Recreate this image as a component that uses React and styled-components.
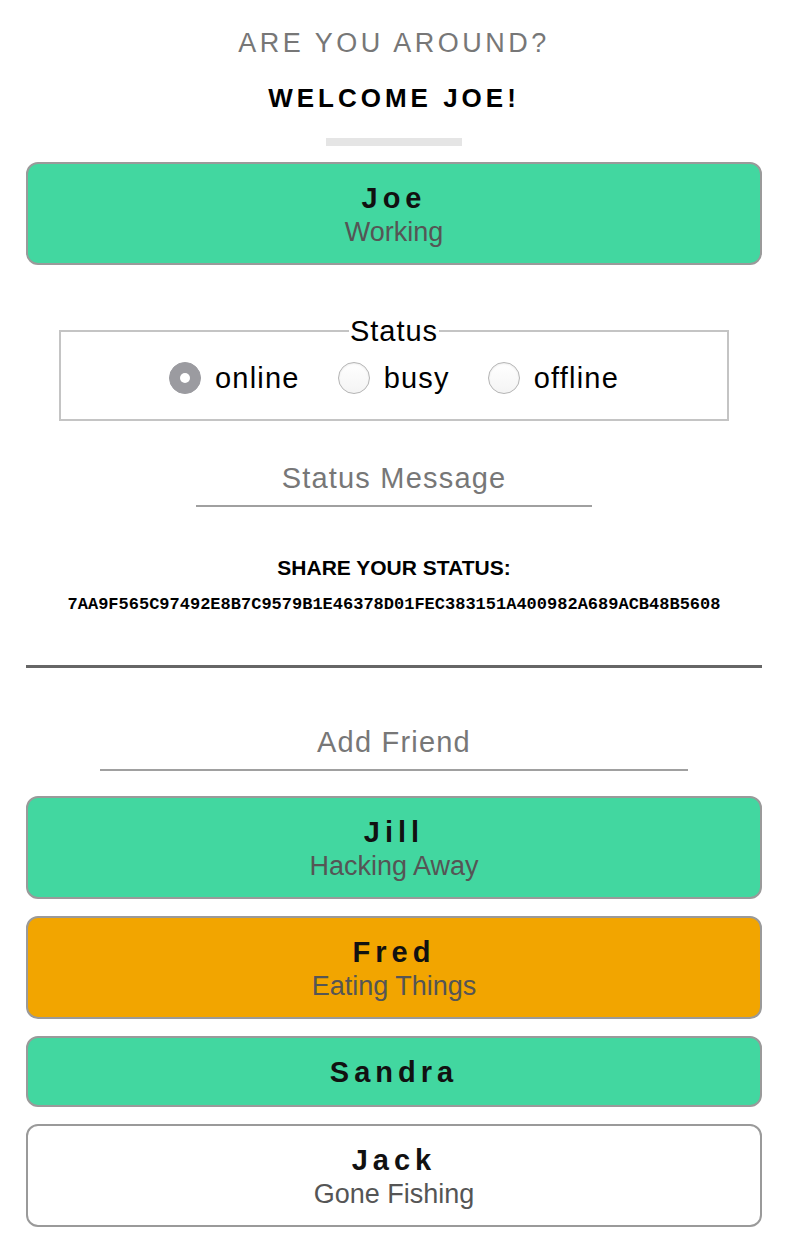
import React, { useState } from 'react';
import styled, { createGlobalStyle } from 'styled-components';

const GlobalStyle = createGlobalStyle`
  html, body {
    margin: 0;
    padding: 0;
    background: #ffffff;
    font-family: "Liberation Sans", Arial, Helvetica, sans-serif;
  }
  * {
    box-sizing: border-box;
  }
`;

const Page = styled.div`
  display: flex;
  flex-direction: column;
  align-items: stretch;
  padding: 27px 26px 40px;
`;

const Title = styled.h2`
  margin: 0;
  font-size: 27px;
  line-height: 32px;
  font-weight: normal;
  letter-spacing: 3.5px;
  color: #777777;
  text-align: center;
`;

const Welcome = styled.h1`
  margin: 23px 0 0;
  font-size: 26px;
  line-height: 32px;
  font-weight: bold;
  letter-spacing: 4px;
  color: #000000;
  text-align: center;
`;

const Bar = styled.div`
  align-self: center;
  width: 136px;
  height: 8px;
  margin-top: 24px;
  background: #e5e5e5;
`;

const statusColors = {
  online: '#42d7a0',
  busy: '#f2a500',
  offline: '#ffffff',
};

const Card = styled.div`
  display: flex;
  flex-direction: column;
  align-items: center;
  padding: 16px 12px 15px;
  border: 2px solid #9a9a9a;
  border-radius: 12px;
  background: ${(p) => statusColors[p.$status]};
`;

const Name = styled.div`
  font-size: 29px;
  line-height: 36px;
  font-weight: bold;
  letter-spacing: 5px;
  color: #111111;
`;

const Message = styled.div`
  font-size: 27px;
  line-height: 32px;
  color: #555555;
`;

const MeCard = styled(Card)`
  margin-top: 16px;
`;

const StatusSet = styled.fieldset`
  margin: 50px 33px 0;
  padding: 11px 12px 21px;
  border: 2px solid #c4c4c4;
  display: flex;
  justify-content: center;
  gap: 38px;
  min-width: 0;
`;

const Legend = styled.legend`
  margin: 0 auto;
  padding: 0 1px;
  font-size: 29px;
  line-height: 32px;
  letter-spacing: 1px;
  color: #000000;
`;

const RadioLabel = styled.label`
  display: flex;
  align-items: center;
  gap: 14px;
  height: 40px;
  font-size: 29px;
  letter-spacing: 1.2px;
  color: #000000;
  cursor: pointer;
`;

const Radio = styled.input`
  appearance: none;
  -webkit-appearance: none;
  margin: 0;
  width: 32px;
  height: 32px;
  border-radius: 50%;
  border: 1px solid #b5b5b5;
  background: linear-gradient(#ffffff, #f4f4f4);
  box-shadow: inset 0 1px 2px rgba(0, 0, 0, 0.08);
  display: grid;
  place-items: center;
  cursor: pointer;

  &:checked {
    border-color: #9b9ba0;
    background: #9b9ba0;
    box-shadow: none;
  }

  &:checked::after {
    content: '';
    width: 10px;
    height: 10px;
    border-radius: 50%;
    background: #ffffff;
  }
`;

const LineInput = styled.input`
  align-self: center;
  width: ${(p) => p.$width}px;
  height: 56px;
  margin-top: ${(p) => p.$top}px;
  padding: 0;
  border: none;
  border-bottom: 2px solid #a0a0a0;
  background: transparent;
  font-family: inherit;
  font-size: 29px;
  letter-spacing: 1.2px;
  text-align: center;
  color: #222222;
  outline: none;

  &::placeholder {
    color: #777777;
  }
`;

const ShareTitle = styled.div`
  margin-top: 49px;
  font-size: 21px;
  line-height: 24px;
  font-weight: bold;
  text-align: center;
  color: #000000;
`;

const ShareCode = styled.div`
  margin-top: 15px;
  font-family: "Liberation Mono", "Courier New", monospace;
  font-size: 17px;
  line-height: 20px;
  font-weight: bold;
  text-align: center;
  color: #000000;
`;

const Divider = styled.hr`
  margin: 50px 0 0;
  border: none;
  height: 3px;
  background: #666666;
`;

const FriendList = styled.div`
  display: flex;
  flex-direction: column;
  gap: 17px;
  margin-top: 25px;
`;

const friends = [
  { name: 'Jill', status: 'online', message: 'Hacking Away' },
  { name: 'Fred', status: 'busy', message: 'Eating Things' },
  { name: 'Sandra', status: 'online', message: '' },
  { name: 'Jack', status: 'offline', message: 'Gone Fishing' },
];

const App = () => {
  const [status, setStatus] = useState('online');

  return (
    <>
      <GlobalStyle />
      <Page>
        <Title>ARE YOU AROUND?</Title>
        <Welcome>WELCOME JOE!</Welcome>
        <Bar />

        <MeCard $status="online">
          <Name>Joe</Name>
          <Message>Working</Message>
        </MeCard>

        <StatusSet>
          <Legend>Status</Legend>
          {['online', 'busy', 'offline'].map((s) => (
            <RadioLabel key={s}>
              <Radio
                type="radio"
                name="status"
                value={s}
                checked={status === s}
                onChange={() => setStatus(s)}
              />
              {s}
            </RadioLabel>
          ))}
        </StatusSet>

        <LineInput $width={396} $top={30} placeholder="Status Message" />

        <ShareTitle>SHARE YOUR STATUS:</ShareTitle>
        <ShareCode>7AA9F565C97492E8B7C9579B1E46378D01FEC383151A400982A689ACB48B5608</ShareCode>

        <Divider />

        <LineInput $width={588} $top={47} placeholder="Add Friend" />

        <FriendList>
          {friends.map((f) => (
            <Card key={f.name} $status={f.status}>
              <Name>{f.name}</Name>
              {f.message && <Message>{f.message}</Message>}
            </Card>
          ))}
        </FriendList>
      </Page>
    </>
  );
};

export default App;
